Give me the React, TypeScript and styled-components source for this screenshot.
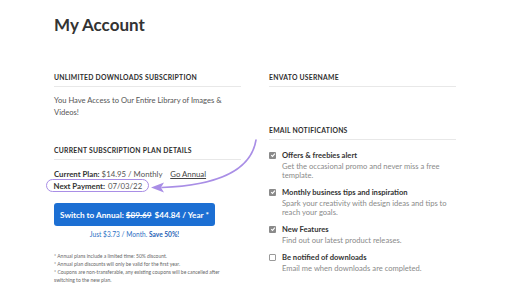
import React from 'react';
import styled, { createGlobalStyle } from 'styled-components';

const GlobalStyle = createGlobalStyle`
  html, body {
    margin: 0;
    padding: 0;
    background: #ffffff;
  }
  body {
    font-family: 'Lato', 'Liberation Sans', sans-serif;
    color: #333;
  }
`;

const Page = styled.div`
  position: relative;
  width: 512px;
  height: 285px;
  box-sizing: border-box;
  padding: 14px 0 0 54px;
  overflow: hidden;
`;

const Title = styled.h1`
  margin: 0;
  font-size: 17px;
  line-height: 22px;
  font-weight: 700;
  color: #333;
`;

const Columns = styled.div`
  display: grid;
  grid-template-columns: 187px 187px;
  column-gap: 28px;
  margin-top: 36px;
`;

const Column = styled.div`
  display: flex;
  flex-direction: column;
  align-items: flex-start;
`;

const SectionHeader = styled.h2<{ $gap?: number }>`
  align-self: stretch;
  margin: ${p => p.$gap ?? 0}px 0 0 0;
  padding-bottom: 4px;
  border-bottom: 1px solid #e8e8e8;
  font-size: 6.8px;
  line-height: 10px;
  font-weight: 700;
  letter-spacing: 0.25px;
  text-transform: uppercase;
  color: #2e2e2e;
`;

const BodyText = styled.p`
  margin: 8px 0 0 0;
  font-size: 7.6px;
  line-height: 11.7px;
  color: #555;
`;

const PlanLine = styled.div`
  margin-top: 9px;
  font-size: 7.8px;
  line-height: 11px;
  color: #555;

  b {
    color: #333;
  }
`;

const GoAnnual = styled.a`
  margin-left: 6px;
  color: #444;
  text-decoration: underline;
`;

const PaymentBox = styled.div`
  display: inline-flex;
  align-items: center;
  box-sizing: border-box;
  height: 13px;
  margin: -1px 0 0 -8px;
  padding: 0 6px 0 6.5px;
  border: 1.5px solid #a98ee6;
  border-radius: 7px;
  font-size: 7.8px;
  color: #555;

  b {
    color: #333;
    margin-right: 3px;
  }
`;

const SwitchButton = styled.button`
  margin-top: 11px;
  width: 161px;
  height: 23px;
  border: none;
  border-radius: 3px;
  background: #1c6fd3;
  color: #fff;
  font-family: inherit;
  font-size: 8.2px;
  font-weight: 700;

  s {
    text-decoration: line-through;
    margin-right: 3px;
  }
`;

const SaveLine = styled.div`
  width: 161px;
  margin-top: 3.5px;
  text-align: center;
  font-size: 6.6px;
  line-height: 9px;
  color: #2d6fc4;

  b {
    font-weight: 700;
    color: #1f5fb5;
  }
`;

const Footnotes = styled.div`
  width: 180px;
  margin-top: 13.5px;
  font-size: 5px;
  line-height: 8px;
  color: #666;

  p {
    margin: 0;
  }
`;

const NotifyList = styled.div`
  display: flex;
  flex-direction: column;
  gap: 7.2px;
  margin-top: 10px;
`;

const NotifyItem = styled.div`
  display: grid;
  grid-template-columns: 13px 1fr;
  align-items: start;
`;

const Box = styled.span<{ $checked: boolean }>`
  display: flex;
  align-items: center;
  justify-content: center;
  box-sizing: border-box;
  width: 7px;
  height: 7px;
  margin-top: 1.6px;
  border-radius: 1px;
  background: ${p => (p.$checked ? '#8a8a8a' : '#fff')};
  border: ${p => (p.$checked ? 'none' : '1px solid #9a9a9a')};
`;

const NotifyLabel = styled.div`
  font-size: 7.6px;
  line-height: 10px;
  font-weight: 700;
  color: #333;
`;

const NotifyDesc = styled.div`
  margin-top: 1.8px;
  font-size: 7.6px;
  line-height: 9px;
  color: #8a8a8a;
`;

const Annotation = styled.svg`
  position: absolute;
  left: 0;
  top: 0;
  pointer-events: none;
`;

const notifications = [
  {
    label: 'Offers & freebies alert',
    desc: 'Get the occasional promo and never miss a free template.',
    checked: true,
  },
  {
    label: 'Monthly business tips and inspiration',
    desc: 'Spark your creativity with design ideas and tips to reach your goals.',
    checked: true,
  },
  {
    label: 'New Features',
    desc: 'Find out our latest product releases.',
    checked: true,
  },
  {
    label: 'Be notified of downloads',
    desc: 'Email me when downloads are completed.',
    checked: false,
  },
];

const Check = () => (
  <svg width="6" height="6" viewBox="0 0 10 10">
    <polyline points="2,5.2 4.2,7.4 8.2,2.8" fill="none" stroke="#fff" strokeWidth="1.8" />
  </svg>
);

export default function App() {
  return (
    <Page>
      <GlobalStyle />
      <Title>My Account</Title>
      <Columns>
        <Column>
          <SectionHeader>Unlimited Downloads Subscription</SectionHeader>
          <BodyText>
            You Have Access to Our Entire Library of Images &amp;
            <br />
            Videos!
          </BodyText>

          <SectionHeader $gap={26.6}>Current Subscription Plan Details</SectionHeader>
          <PlanLine>
            <b>Current Plan:</b> $14.95 / Monthly <GoAnnual>Go Annual</GoAnnual>
          </PlanLine>
          <PaymentBox>
            <b>Next Payment:</b> 07/03/22
          </PaymentBox>

          <SwitchButton>
            Switch to Annual: <s>$89.69</s>$44.84 / Year *
          </SwitchButton>
          <SaveLine>
            Just $3.73 / Month. <b>Save 50%!</b>
          </SaveLine>

          <Footnotes>
            <p>* Annual plans include a limited time: 50% discount.</p>
            <p>* Annual plan discounts will only be valid for the first year.</p>
            <p>* Coupons are non-transferable, any existing coupons will be cancelled after switching to the new plan.</p>
          </Footnotes>
        </Column>

        <Column>
          <SectionHeader>Envato Username</SectionHeader>
          <SectionHeader $gap={38}>Email Notifications</SectionHeader>
          <NotifyList>
            {notifications.map(n => (
              <NotifyItem key={n.label}>
                <Box $checked={n.checked}>{n.checked && <Check />}</Box>
                <div>
                  <NotifyLabel>{n.label}</NotifyLabel>
                  <NotifyDesc>{n.desc}</NotifyDesc>
                </div>
              </NotifyItem>
            ))}
          </NotifyList>
        </Column>
      </Columns>

      <Annotation width="512" height="285" viewBox="0 0 512 285">
        <path
          d="M256 140 C252 165 228 185 162 187.5"
          fill="none"
          stroke="#a98ee6"
          strokeWidth="1.6"
          strokeLinecap="round"
        />
        <polygon points="151,187.5 164,182.5 161,187.5 164,192.5" fill="#a98ee6" />
      </Annotation>
    </Page>
  );
}
